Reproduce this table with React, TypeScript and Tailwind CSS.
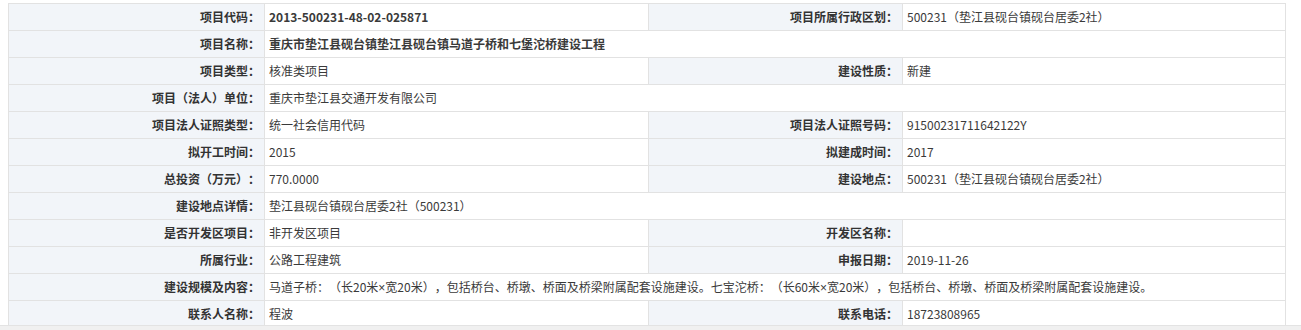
import React from "react";

type Cell = { label: string; value: string; bold?: boolean };
type Row = [Cell] | [Cell, Cell];

const rows: Row[] = [
  [
    { label: "项目代码：", value: "2013-500231-48-02-025871", bold: true },
    { label: "项目所属行政区划：", value: "500231（垫江县砚台镇砚台居委2社）" },
  ],
  [{ label: "项目名称：", value: "重庆市垫江县砚台镇垫江县砚台镇马道子桥和七堡沱桥建设工程", bold: true }],
  [
    { label: "项目类型：", value: "核准类项目" },
    { label: "建设性质：", value: "新建" },
  ],
  [{ label: "项目（法人）单位：", value: "重庆市垫江县交通开发有限公司" }],
  [
    { label: "项目法人证照类型：", value: "统一社会信用代码" },
    { label: "项目法人证照号码：", value: "91500231711642122Y" },
  ],
  [
    { label: "拟开工时间：", value: "2015" },
    { label: "拟建成时间：", value: "2017" },
  ],
  [
    { label: "总投资（万元）：", value: "770.0000" },
    { label: "建设地点：", value: "500231（垫江县砚台镇砚台居委2社）" },
  ],
  [{ label: "建设地点详情：", value: "垫江县砚台镇砚台居委2社（500231）" }],
  [
    { label: "是否开发区项目：", value: "非开发区项目" },
    { label: "开发区名称：", value: "" },
  ],
  [
    { label: "所属行业：", value: "公路工程建筑" },
    { label: "申报日期：", value: "2019-11-26" },
  ],
  [
    {
      label: "建设规模及内容：",
      value:
        "马道子桥：（长20米×宽20米），包括桥台、桥墩、桥面及桥梁附属配套设施建设。七宝沱桥：（长60米×宽20米），包括桥台、桥墩、桥面及桥梁附属配套设施建设。",
    },
  ],
  [
    { label: "联系人名称：", value: "程波" },
    { label: "联系电话：", value: "18723808965" },
  ],
];

function renderValue(v: string) {
  const parts = v.split("×");
  return parts.map((p, i) => (
    <React.Fragment key={i}>
      {p}
      {i < parts.length - 1 && (
        <span style={{ fontFamily: '"Liberation Sans", sans-serif' }}>×</span>
      )}
    </React.Fragment>
  ));
}

const labelCls =
  "h-[27px] border border-[#e2e2e2] bg-[#f2f5f9] pr-[4px] text-right font-bold text-[#333] whitespace-nowrap";
const valueCls =
  "h-[27px] border border-[#e2e2e2] bg-white pl-[4px] text-left text-[#3a3a3a] whitespace-nowrap overflow-hidden";

export default function App() {
  return (
    <div
      className="flex h-[330px] w-[1301px] flex-col bg-white [text-spacing-trim:space-all]"
      style={{ fontFamily: '"Microsoft YaHei", "Noto Sans CJK SC", "Noto Sans", sans-serif' }}
    >
      <div className="h-[325px] overflow-hidden pl-[8px] pt-[3px]">
        <table className="w-[1277px] table-fixed border-collapse text-[12px] leading-[16px]">
          <colgroup>
            <col className="w-[256px]" />
            <col className="w-[384px]" />
            <col className="w-[254px]" />
            <col className="w-[383px]" />
          </colgroup>
          <tbody>
            {rows.map((r, i) => (
              <tr key={i}>
                <td className={labelCls}>{r[0].label}</td>
                {r.length === 1 ? (
                  <td colSpan={3} className={valueCls + (r[0].bold ? " font-bold" : "")}>
                    {renderValue(r[0].value)}
                  </td>
                ) : (
                  <>
                    <td className={valueCls + (r[0].bold ? " font-bold" : "")}>{renderValue(r[0].value)}</td>
                    <td className={labelCls}>{r[1].label}</td>
                    <td className={valueCls}>{renderValue(r[1].value)}</td>
                  </>
                )}
              </tr>
            ))}
          </tbody>
        </table>
      </div>
      <div className="h-[5px] border-t border-[#e3e3e3] bg-[#f0f0f0]" />
    </div>
  );
}
